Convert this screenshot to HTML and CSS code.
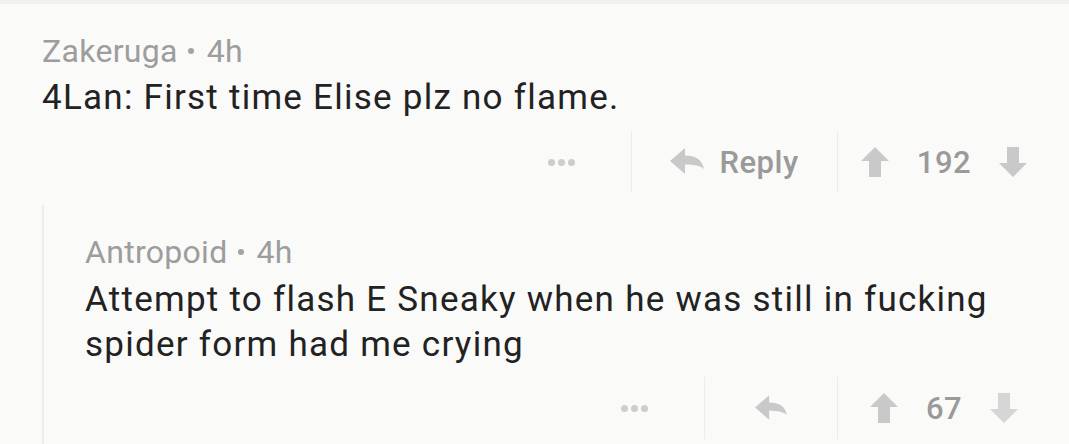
FILE: index.html
```html
<!DOCTYPE html>
<html lang="en">
<head>
<meta charset="utf-8">
<title>Comments</title>
<link rel="stylesheet" href="styles.css">
</head>
<body>
<div class="topbar"></div>
<div class="thread">
  <div class="comment">
    <div class="meta">Zakeruga<span class="dot"></span>4h</div>
    <div class="text">4Lan: First time Elise plz no flame.</div>
    <div class="actions">
      <div class="more"><span></span><span></span><span></span></div>
      <div class="reply reply-wide">
        <svg class="ico-reply" viewBox="0 0 34 28" width="34" height="28"><path d="M0 13 L15 0 L15 7.5 C25 7.5 32 11 34 21 C30 17.5 24 16.5 15 16.5 L15 26 Z" fill="#c9c9c9"/></svg>
        <span class="lbl">Reply</span>
      </div>
      <div class="vote">
        <svg class="ico-vote" viewBox="0 0 28 30" width="28" height="30"><path d="M14 0 L28 14 L20 14 L20 30 L8 30 L8 14 L0 14 Z" fill="#c9c9c9"/></svg>
        <span class="score">192</span>
        <svg class="ico-vote" viewBox="0 0 28 30" width="28" height="30"><path d="M14 30 L28 16 L20 16 L20 0 L8 0 L8 16 L0 16 Z" fill="#c9c9c9"/></svg>
      </div>
    </div>
  </div>
  <div class="child">
    <div class="comment">
      <div class="meta">Antropoid<span class="dot"></span>4h</div>
      <div class="text">Attempt to flash E Sneaky when he was still in fucking<br>spider form had me crying</div>
      <div class="actions">
        <div class="more"><span></span><span></span><span></span></div>
        <div class="reply reply-narrow">
          <svg class="ico-reply" viewBox="0 0 34 28" width="32" height="27"><path d="M0 13 L15 0 L15 7.5 C25 7.5 32 11 34 21 C30 17.5 24 16.5 15 16.5 L15 26 Z" fill="#c9c9c9"/></svg>
        </div>
        <div class="vote">
          <svg class="ico-vote" viewBox="0 0 28 30" width="28" height="30"><path d="M14 0 L28 14 L20 14 L20 30 L8 30 L8 14 L0 14 Z" fill="#c9c9c9"/></svg>
          <span class="score">67</span>
          <svg class="ico-vote" viewBox="0 0 28 30" width="28" height="30"><path d="M14 30 L28 16 L20 16 L20 0 L8 0 L8 16 L0 16 Z" fill="#d6d6d6"/></svg>
        </div>
      </div>
    </div>
  </div>
</div>
</body>
</html>
```

FILE: styles.css
```css
* { box-sizing: border-box; }
html, body { margin: 0; padding: 0; }
body {
  background: #fafaf9;
  font-family: Roboto, "Liberation Sans", sans-serif;
  width: 1069px;
  height: 444px;
  overflow: hidden;
}
.topbar {
  height: 4px;
  background: #f1f1f0;
}
.thread {
  padding: 25px 19px 0 42px;
}
.meta {
  font-size: 32px;
  line-height: 45px;
  letter-spacing: 0.3px;
  color: #9d9d9d;
}
.meta .dot {
  display: inline-block;
  width: 6px;
  height: 6px;
  border-radius: 50%;
  background: #a3a3a3;
  margin: 0 13px 0 10px;
  vertical-align: 8px;
}
.text {
  font-size: 35px;
  line-height: 45px;
  letter-spacing: 1.25px;
  color: #222222;
  margin-top: 1px;
}
.actions {
  display: flex;
  justify-content: flex-end;
  align-items: center;
  height: 62px;
  margin-top: 11px;
}
.more {
  width: 139px;
  display: flex;
  justify-content: center;
  gap: 3px;
}
.more span {
  width: 7px;
  height: 7px;
  border-radius: 50%;
  background: #cdcdcd;
}
.reply {
  height: 100%;
  display: flex;
  align-items: center;
  justify-content: center;
  border-left: 1px solid #ececeb;
  border-right: 1px solid #ececeb;
  gap: 15px;
}
.reply-wide { width: 207px; }
.reply-narrow { width: 134px; }
.lbl, .score {
  font-size: 31px;
  font-weight: 500;
  color: #9a9a9a;
  letter-spacing: 0.5px;
}
.vote {
  width: 212px;
  display: flex;
  align-items: center;
  justify-content: center;
}
.score { margin: 0 28px; }
.child {
  margin-top: 12px;
  border-left: 2px solid #ececeb;
  padding: 25px 0 0 41px;
  height: 240px;
}
.child .text { margin-top: 2px; }
.child .actions { margin-top: 10px; }
```
